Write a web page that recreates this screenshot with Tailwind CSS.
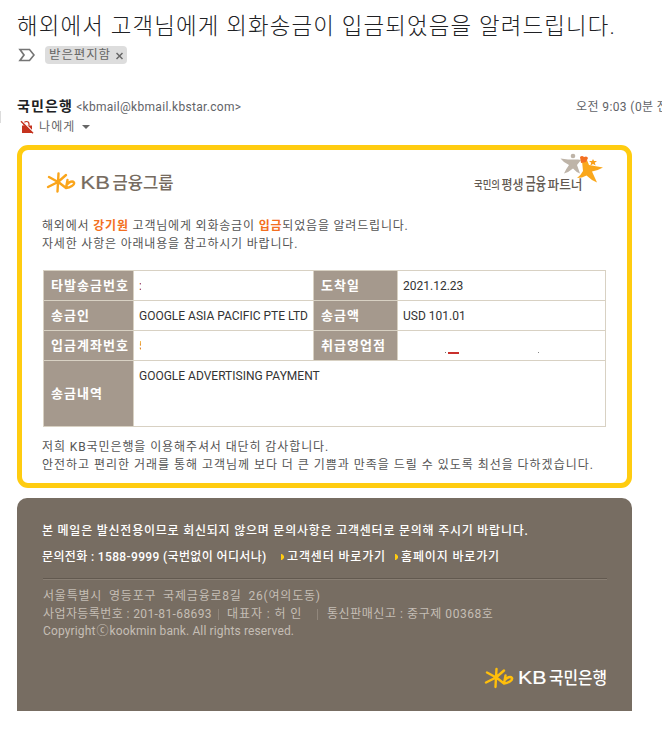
<!DOCTYPE html>
<html lang="ko">
<head>
  <meta charset="UTF-8" />
  <meta name="viewport" content="width=device-width, initial-scale=1.0"/>
  <title>해외에서 고객님에게 외화송금이 입금되었음을 알려드립니다.</title>
  <script src="https://cdn.jsdelivr.net/npm/@tailwindcss/browser@4"></script>
</head>
<body class="bg-white w-[662px] h-[733px] overflow-hidden relative font-[Roboto,'Noto_Sans_CJK_KR',sans-serif] text-xs">
  <!-- avatar edge -->
  <div class="absolute left-0 top-[111px] w-px h-3 bg-[#dcdcdc]"></div>

  <!-- Mail header -->
  <header class="pl-[17px] h-[145px]">
    <h1 class="pt-[9px] h-[44px] leading-[34px] text-[22.4px] font-light tracking-[1.17px] text-[#202124] whitespace-nowrap">해외에서 고객님에게 외화송금이 입금되었음을 알려드립니다.</h1>
    <div class="flex items-center h-[22px]">
      <svg class="w-[18px] h-[14px] mr-[10px]" viewBox="0 0 18 14" fill="none" stroke="#757575" stroke-width="1.7"><path d="M3 1.5h9.5L17 7l-4.500 5.500H3L7 7z"/></svg>
      <span class="flex items-center w-[82px] h-[18px] pl-1 bg-[#dddddd] rounded text-[#666] tracking-[.9px] whitespace-nowrap text-[12.5px]">받은편지함
        <svg class="w-[7px] h-[8px] ml-[5px] mt-[2px]" viewBox="0 0 7 8" stroke="#666" stroke-width="1.5"><path d="M.5 1l6 6M6.500 1l-6 6"/></svg>
      </span>
    </div>
    <div class="flex items-center mt-[30px] h-5 whitespace-nowrap">
      <span class="text-sm font-bold tracking-[1.15px] text-[#202124]">국민은행</span>
      <span class="ml-[3px] pt-px text-[#5f6368] tracking-[.3px]">&lt;kbmail@kbmail.kbstar.com&gt;</span>
      <span class="absolute left-[576px] pt-px text-[#5f6368] tracking-[.4px]">오전 9:03 (0분 전)</span>
    </div>
    <div class="flex items-center h-5 text-[#666]">
      <svg class="w-[14px] h-[14px] ml-[3px] mr-[5px] mt-px" viewBox="0 0 14 14"><path d="M4 5.500V4a2.500 2.500 0 0 1 5 0v1.500" fill="none" stroke="#c5331f" stroke-width="1.200"/><path d="M2 5.500h10v7.500H2z" fill="#c5331f"/><path d="M2 1l12 12" stroke="#fff" stroke-width="1.600"/><path d="M1 1.200l12 12" stroke="#c5331f" stroke-width="1.400"/></svg>
      <span class="tracking-[1.1px] pt-px">나에게</span>
      <svg class="w-2 h-1 ml-[7px] mt-[2px]" viewBox="0 0 8 4"><path d="M0 0h8L4 4z" fill="#666"/></svg>
    </div>
  </header>

  <!-- Notice card -->
  <main class="ml-[17px] w-[615px] h-[343px] border-[5px] border-[#ffcc10] rounded-[11px] px-5 text-[#555]">
    <div class="flex justify-between h-[67px]">
      <svg class="w-[130px] h-[26px] mt-[20px] ml-1" viewBox="0 0 130 26">
        <g fill="none" stroke="#faa51b" stroke-width="2.400" stroke-linecap="round" stroke-linejoin="round"><path d="M12.500 3.500Q12 12 11.500 21.500M3 7L13 12.500L20 18M2 17L12 12L20 5M21.500 10L20 18C24 17.500 29 15 28 12.500C26.500 10.500 23 12 21.500 14"/></g>
        <text x="34.500" y="19" font-family="Liberation Sans" font-size="19" textLength="29.500" lengthAdjust="spacingAndGlyphs" fill="#766b60" stroke="#766b60" stroke-width=".2">KB</text>
        <text x="66.500" y="18.500" font-size="17" font-weight="500" textLength="61" lengthAdjust="spacingAndGlyphs" fill="#766b60">금융그룹</text>
      </svg>
      <svg class="w-[135px] h-[45px] mr-1" viewBox="0 0 135 45">
        <g fill="#beb4a8"><circle cx="105" cy="6" r="2.300"/><path d="M92.500 8.500L100 9.500H110L113 10L109 15L112 23.500Q108 22 105 18.500Q101 22 96 23.500Q98 19 101 15Q96 13 92.500 8.500z"/></g>
        <path d="M125 9l1 2 3 0-2.200 1.700.8 2.800-2.600-1.500-2.600 1.500.8-2.800-2.200-1.700 3 0z" fill="#f9a01b"/>
        <path d="M114 11L119 10L121 15Q128 16 135 17.500Q130 20.500 124 21.500L129 32.500Q123 30 118.500 25.500Q114 28 109 28Q113 25 115 21z" fill="#faa71b"/>
        <path d="M112 7Q114 5 116 7Q119 5.500 120 8L118 12L113 13z" fill="#f36f21"/>
        <g fill="#625951" font-weight="500">
          <text x="6" y="38.500" font-size="11.500" textLength="26" lengthAdjust="spacingAndGlyphs">국민의</text>
          <text x="33.500" y="38.500" font-size="13" textLength="22" lengthAdjust="spacingAndGlyphs">평생</text>
          <text x="57.500" y="40" font-size="16.500" textLength="20.500" lengthAdjust="spacingAndGlyphs">금융</text>
          <text x="79.500" y="38.500" font-size="13" textLength="35" lengthAdjust="spacingAndGlyphs">파트너</text>
        </g>
      </svg>
    </div>
    <p class="leading-[18px] tracking-[.81px] whitespace-nowrap">해외에서 <b class="text-[#f36f21]">강기원</b> 고객님에게 외화송금이 <b class="text-[#f36f21]">입금</b>되었음을 알려드립니다.<br/>자세한 사항은 아래내용을 참고하시기 바랍니다.</p>

    <table class="table-fixed border-collapse w-[563px] ml-px mt-[17px] text-left text-[#333] whitespace-nowrap [&_td]:border [&_td]:border-[#d8d1c3] [&_td]:pl-[5px] [&_th]:border [&_th]:border-[#d8d1c3] [&_th]:bg-[#a5998d] [&_th]:text-white [&_th]:text-[13px] [&_th]:tracking-[1.05px] [&_th]:pl-[7px]">
      <colgroup><col class="w-[90px]"/><col class="w-[180px]"/><col class="w-[84px]"/><col/></colgroup>
      <tr class="h-[30px]"><th>타발송금번호</th><td><span class="block w-[2px] overflow-hidden text-[#803040]">:</span></td><th>도착일</th><td>2021.12.23</td></tr>
      <tr class="h-[30px]"><th>송금인</th><td>GOOGLE ASIA PACIFIC PTE LTD</td><th>송금액</th><td>USD 101.01</td></tr>
      <tr class="h-[30px]"><th>입금계좌번호</th><td><span class="block w-[2px] overflow-hidden text-[#c87020]">5</span></td><th>취급영업점</th>
        <td><div class="flex items-center pl-[42px] pt-[14px]"><i class="w-px h-px bg-[#777]"></i><i class="w-[11px] h-[2px] ml-[2px] bg-[#c9302c]"></i><i class="w-px h-px ml-[79px] bg-[#888]"></i></div></td></tr>
      <tr class="h-[66px]"><th>송금내역</th><td colspan="3" class="align-top pt-[7px]">GOOGLE ADVERTISING PAYMENT</td></tr>
    </table>

    <p class="mt-[11px] leading-[18px] tracking-[.9px] whitespace-nowrap">저희 KB국민은행을 이용해주셔서 대단히 감사합니다.</p>
    <p class="leading-[18px] tracking-[.97px] whitespace-nowrap">안전하고 편리한 거래를 통해 고객님께 보다 더 큰 기쁨과 만족을 드릴 수 있도록 최선을 다하겠습니다.</p>
  </main>

  <!-- Bank footer -->
  <footer class="ml-[17px] mt-[10px] w-[615px] h-[213px] bg-[#776d62] rounded-t-[10px] pl-[25px] pr-[25px] pt-[21px] text-[#c5beb5] whitespace-nowrap">
    <div class="text-white font-medium">
      <p class="leading-[25px] tracking-[.77px]">본 메일은 발신전용이므로 회신되지 않으며 문의사항은 고객센터로 문의해 주시기 바랍니다.</p>
      <div class="flex items-center h-[25px]">
        <span class="w-[239px] tracking-[.36px]">문의전화 : 1588-9999 (국번없이 어디서나)</span>
        <svg class="w-[3px] h-[6px] mr-[3px] mt-px" viewBox="0 0 3 6"><path d="M0 0h1l2 2v2L1 6H0z" fill="#ffcc10"/></svg>
        <a href="#" class="w-[108px] tracking-[.85px]">고객센터 바로가기</a>
        <svg class="w-[3px] h-[6px] mr-[3px] mt-px" viewBox="0 0 3 6"><path d="M0 0h1l2 2v2L1 6H0z" fill="#ffcc10"/></svg>
        <a href="#" class="tracking-[.85px]">홈페이지 바로가기</a>
      </div>
    </div>
    <div class="mt-[9px] ml-px border-t border-[#62594f] h-[2px] bg-[#887e73]"></div>
    <div class="pt-[7px] pl-px leading-[18px]">
      <p class="tracking-[.8px] [word-spacing:3px]">서울특별시 영등포구 국제금융로8길 26(여의도동)</p>
      <div class="flex">
        <span class="w-[175px] tracking-[.4px]">사업자등록번호 : 201-81-68693</span>
        <i class="w-px h-[11px] mt-1 bg-[#91877c]"></i>
        <span class="w-[98px] pl-2 tracking-[.9px]">대표자 : 허 인</span>
        <i class="w-px h-[11px] mt-1 bg-[#91877c]"></i>
        <span class="pl-[9px] tracking-[.55px]">통신판매신고 : 중구제 00368호</span>
      </div>
      <p class="tracking-[.13px] leading-[17px]">Copyright<span class="mx-px">ⓒ</span>kookmin bank. All rights reserved.</p>
    </div>
    <svg class="w-[126px] h-[26px] ml-auto mr-[-2px] mt-[25px]" viewBox="0 0 126 26">
      <g fill="none" stroke="#ffbf0b" stroke-width="2.400" stroke-linecap="round" stroke-linejoin="round"><path d="M13.500 4Q13 12 12.500 22M4 7.500L14 13L21 18.500M3 17.500L13 12.500L21 5.500M22.500 10.500L21 18.500C25 18 30 15.500 29 13C27.500 11 24 12.500 22.500 14.500"/></g>
      <text x="35" y="19" font-family="Liberation Sans" font-size="19" textLength="28.500" lengthAdjust="spacingAndGlyphs" fill="#fff" stroke="#fff" stroke-width=".2">KB</text>
      <text x="66" y="18.500" font-size="16.500" font-weight="500" textLength="58" lengthAdjust="spacingAndGlyphs" fill="#fff">국민은행</text>
    </svg>
  </footer>
</body>
</html>
